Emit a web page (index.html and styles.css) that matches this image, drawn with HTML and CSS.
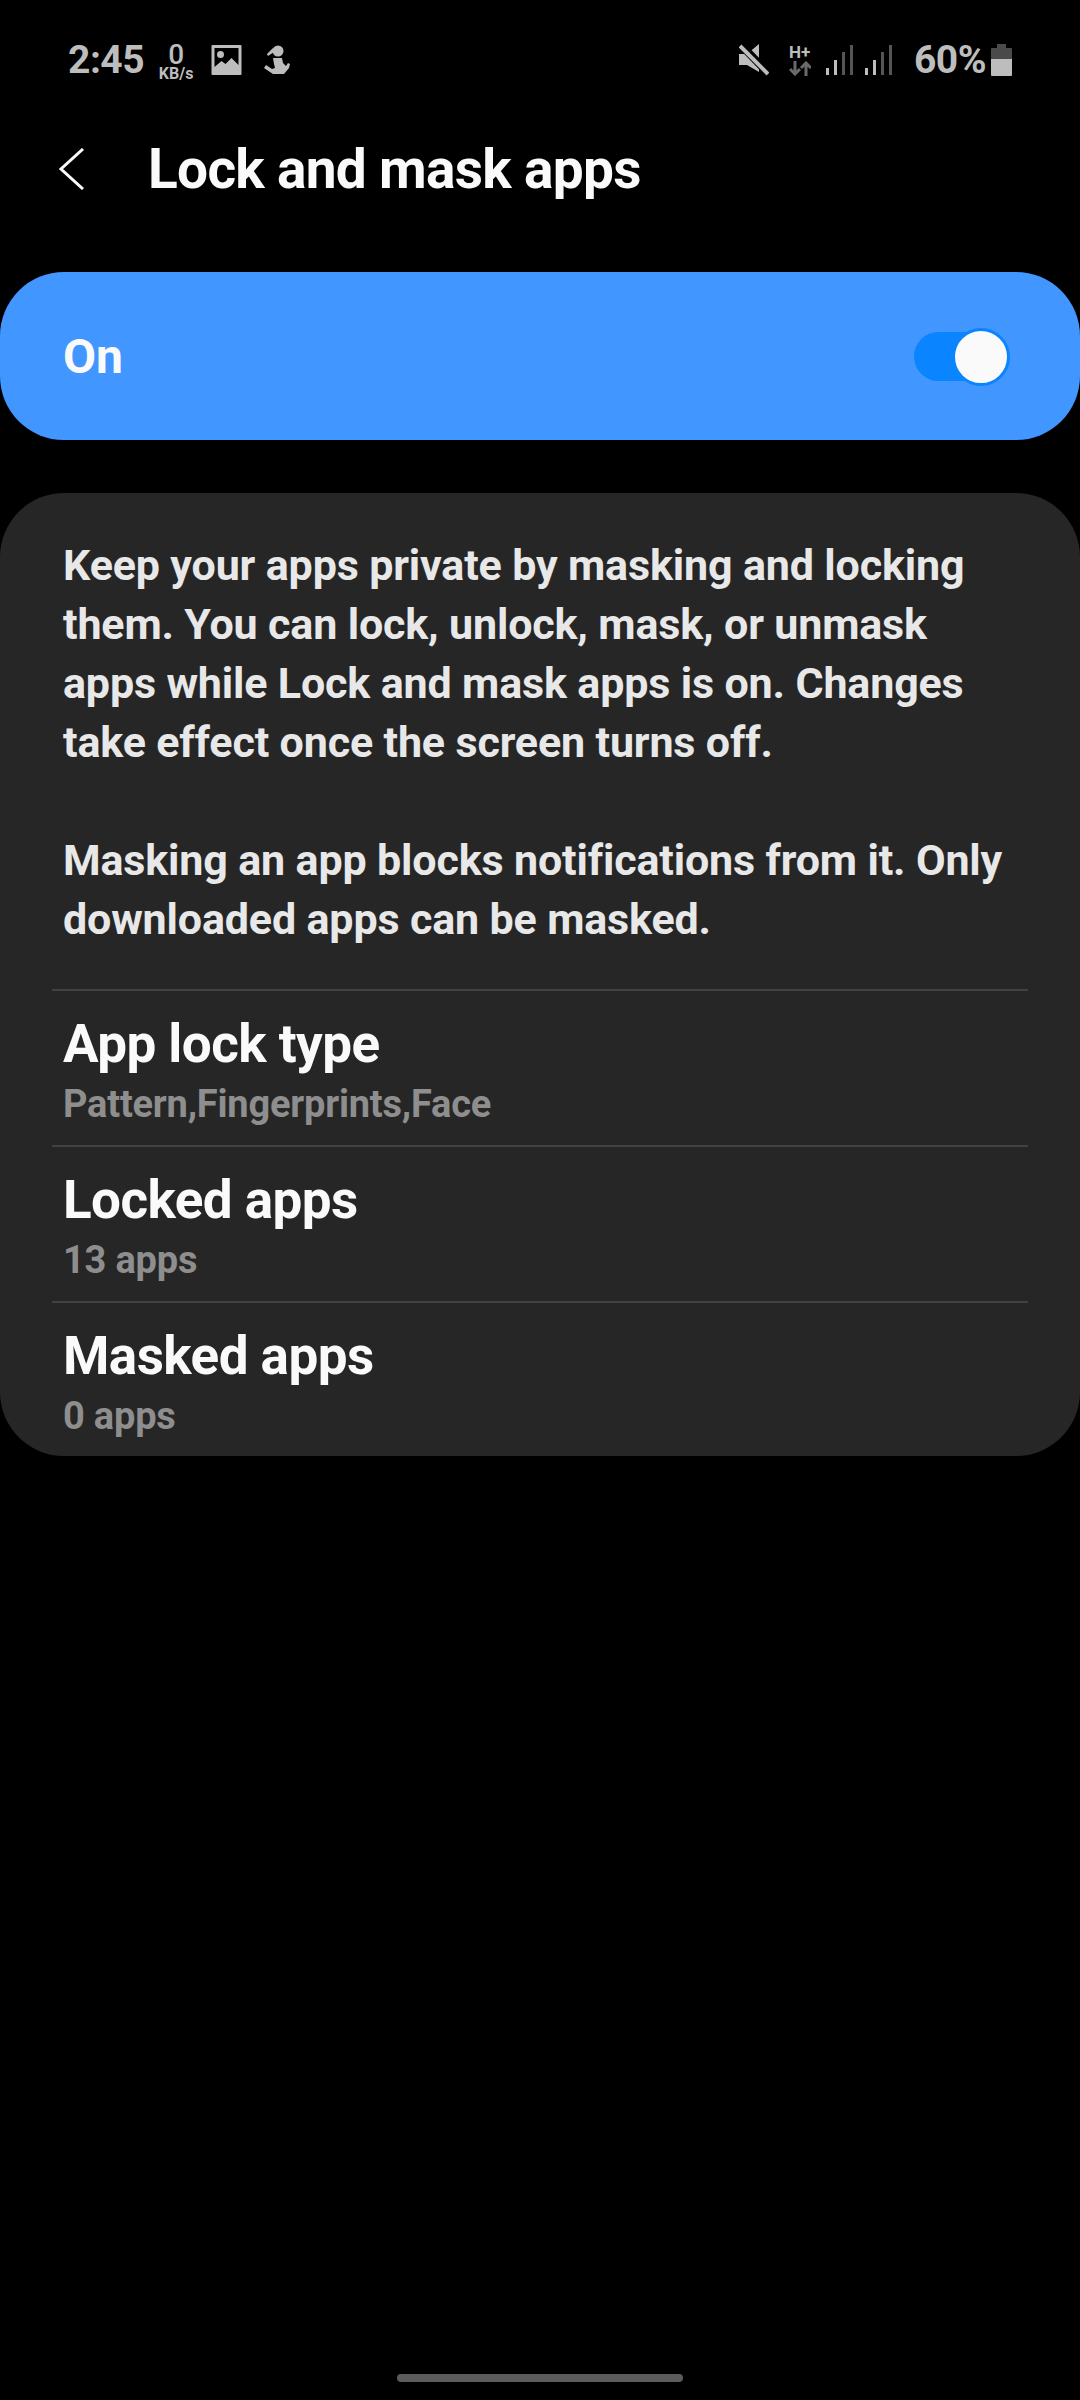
FILE: index.html
```html
<!DOCTYPE html>
<html lang="en">
<head>
	<meta charset="UTF-8">
	<title>Lock and mask apps</title>
	<link rel="stylesheet" href="styles.css">
</head>
<body>
	<div class="status">
		<span class="time">2:45</span>
		<span class="speed"><b>0</b><i>KB/s</i></span>
		<svg class="ic-img" width="31" height="30" viewBox="0 0 30 30"><path fill-rule="evenodd" d="M1 0h28a1 1 0 0 1 1 1v28a1 1 0 0 1-1 1H1a1 1 0 0 1-1-1V1a1 1 0 0 1 1-1zM3 3v19l7-6 4 3 6-6 7 7V3zM9 6a3.500 3.500 0 1 1 0 7a3.500 3.500 0 0 1 0-7z" fill="#bdbdbd"/></svg>
		<svg class="ic-run" width="26" height="30" viewBox="0 0 26 30" fill="#bdbdbd"><circle cx="14" cy="6" r="5.500"/><path d="M9 3 3 9l1 2 6-4z"/><path d="M9 13h9l1 5 3 3 2-3 2 1-1 4-5 6H9l-9-6 2-3 6 4 3-1-1-4z"/></svg>
		<span class="spacer"></span>
		<svg class="ic-mute" width="30" height="32" viewBox="0 0 30 32"><path d="M0 10h8L20 0v28L8 21H0z" fill="#bdbdbd"/><path d="M3 2l26 27" stroke="#000" stroke-width="8"/><path d="M1 2l28 28" stroke="#bdbdbd" stroke-width="4"/></svg>
		<span class="net"><span class="hplus">H+</span>
			<svg width="22" height="15" viewBox="0 0 22 15" fill="none" stroke="#6a6a6a" stroke-width="3"><path d="M6 0v13M1 8l5 5 5-5"/><path d="M17 15V2M12 7l5-5 5 5"/></svg>
		</span>
		<svg class="ic-sig" width="28" height="30" viewBox="0 0 28 30"><rect x="0" y="23" width="3" height="7" fill="#bdbdbd"/><rect x="8" y="15" width="3" height="15" fill="#bdbdbd"/><rect x="16" y="7" width="3" height="23" fill="#555"/><rect x="24" y="0" width="3" height="30" fill="#555"/></svg>
		<svg class="ic-sig sig2" width="28" height="30" viewBox="0 0 28 30"><rect x="0" y="23" width="3" height="7" fill="#bdbdbd"/><rect x="8" y="15" width="3" height="15" fill="#bdbdbd"/><rect x="16" y="7" width="3" height="23" fill="#555"/><rect x="24" y="0" width="3" height="30" fill="#555"/></svg>
		<span class="pct">60%</span>
		<svg class="ic-bat" width="21" height="32" viewBox="0 0 21 32"><path d="M6 0h9v4h5a1 1 0 0 1 1 1v10H0V5a1 1 0 0 1 1-1h5z" fill="#4a4a4a"/><path d="M0 15h21v16a1 1 0 0 1-1 1H1a1 1 0 0 1-1-1z" fill="#bdbdbd"/></svg>
	</div>

	<div class="top">
		<svg class="back" width="28" height="42" viewBox="0 0 28 42" fill="none" stroke="#fafafa" stroke-width="3"><path d="M25 1 3 21l22 20"/></svg>
		<h1>Lock and mask apps</h1>
	</div>

	<div class="onbar">
		<span>On</span>
		<div class="toggle"><div class="thumb"></div></div>
	</div>

	<div class="card">
		<div class="desc">
			<p>Keep your apps private by masking and locking them. You can lock, unlock, mask, or unmask apps while Lock and mask apps is on. Changes take effect once the screen turns off.</p>
			<p>Masking an app blocks notifications from it. Only downloaded apps can be masked.</p>
		</div>
		<div class="item">
			<div class="name">App lock type</div>
			<div class="sub">Pattern,Fingerprints,Face</div>
		</div>
		<div class="item">
			<div class="name">Locked apps</div>
			<div class="sub">13 apps</div>
		</div>
		<div class="item">
			<div class="name">Masked apps</div>
			<div class="sub">0 apps</div>
		</div>
	</div>

	<div class="navline"></div>
</body>
</html>
```
FILE: styles.css
```css
* {
	box-sizing: border-box;
}
html, body {
	margin: 0;
	padding: 0;
}
body {
	width: 1080px;
	height: 2400px;
	background: #000;
	font-family: Roboto, "Liberation Sans", sans-serif;
	overflow: hidden;
	display: flex;
	flex-direction: column;
}

/* status bar */
.status {
	height: 60px;
	margin-top: 30px;
	padding: 0 68px;
	display: flex;
	align-items: center;
	color: #bdbdbd;
}
.time {
	font-size: 39px;
	font-weight: 700;
	letter-spacing: -0.5px;
}
.speed {
	display: flex;
	flex-direction: column;
	align-items: center;
	margin-left: 13px;
	width: 38px;
	margin-top: 2px;
}
.speed b {
	font-size: 28px;
	font-weight: 500;
	line-height: 26px;
}
.speed i {
	font-size: 16px;
	font-style: normal;
	font-weight: 700;
	line-height: 12px;
}
.ic-img {
	margin-left: 16px;
}
.ic-run {
	margin-left: 22px;
}
.spacer {
	flex: 1;
}
.net {
	display: flex;
	flex-direction: column;
	margin-left: 20px;
	width: 22px;
}
.hplus {
	font-size: 17px;
	font-weight: 700;
	line-height: 17px;
}
.ic-sig {
	margin-left: 15px;
}
.sig2 {
	margin-left: 11px;
}
.pct {
	font-size: 39px;
	font-weight: 700;
	letter-spacing: -0.5px;
	margin-left: 21px;
}
.ic-bat {
	margin-left: 5px;
}

/* header */
.top {
	height: 108px;
	margin-top: 25px;
	padding-left: 58px;
	display: flex;
	align-items: center;
}
.top h1 {
	margin: 0 0 0 62px;
	font-size: 55px;
	font-weight: 700;
	letter-spacing: -0.7px;
	color: #fafafa;
}

/* master switch */
.onbar {
	height: 168px;
	margin-top: 49px;
	padding: 0 78px 0 63px;
	border-radius: 64px;
	background: #4296ff;
	display: flex;
	align-items: center;
	justify-content: space-between;
	color: #fafafa;
	font-size: 48px;
	font-weight: 700;
	letter-spacing: 0;
}
.toggle {
	width: 88px;
	height: 49px;
	border-radius: 25px;
	background: #0a84ff;
	position: relative;
}
.thumb {
	position: absolute;
	right: -8px;
	top: -4px;
	width: 58px;
	height: 58px;
	border: 3px solid #0a84ff;
	border-radius: 50%;
	background: #fafafa;
}

/* card */
.card {
	height: 963px;
	margin-top: 53px;
	padding: 43px 52px 0;
	border-radius: 64px;
	background: #262626;
}
.desc {
	padding: 0 11px;
	height: 453px;
	font-size: 43px;
	line-height: 59px;
	font-weight: 700;
	letter-spacing: -0.15px;
	color: #e8e8e8;
}
.desc p {
	margin: 0 0 59px;
}
.item {
	height: 156px;
	border-top: 2px solid #424242;
	padding: 22px 11px 0;
}
.name {
	font-size: 53px;
	line-height: 62px;
	font-weight: 700;
	letter-spacing: -0.55px;
	color: #fafafa;
}
.sub {
	font-size: 38px;
	line-height: 59px;
	font-weight: 700;
	letter-spacing: -0.2px;
	color: #8e8e8e;
}

.navline {
	position: absolute;
	left: 397px;
	top: 2374px;
	width: 286px;
	height: 8px;
	border-radius: 4px;
	background: #5c5c5c;
}
```
